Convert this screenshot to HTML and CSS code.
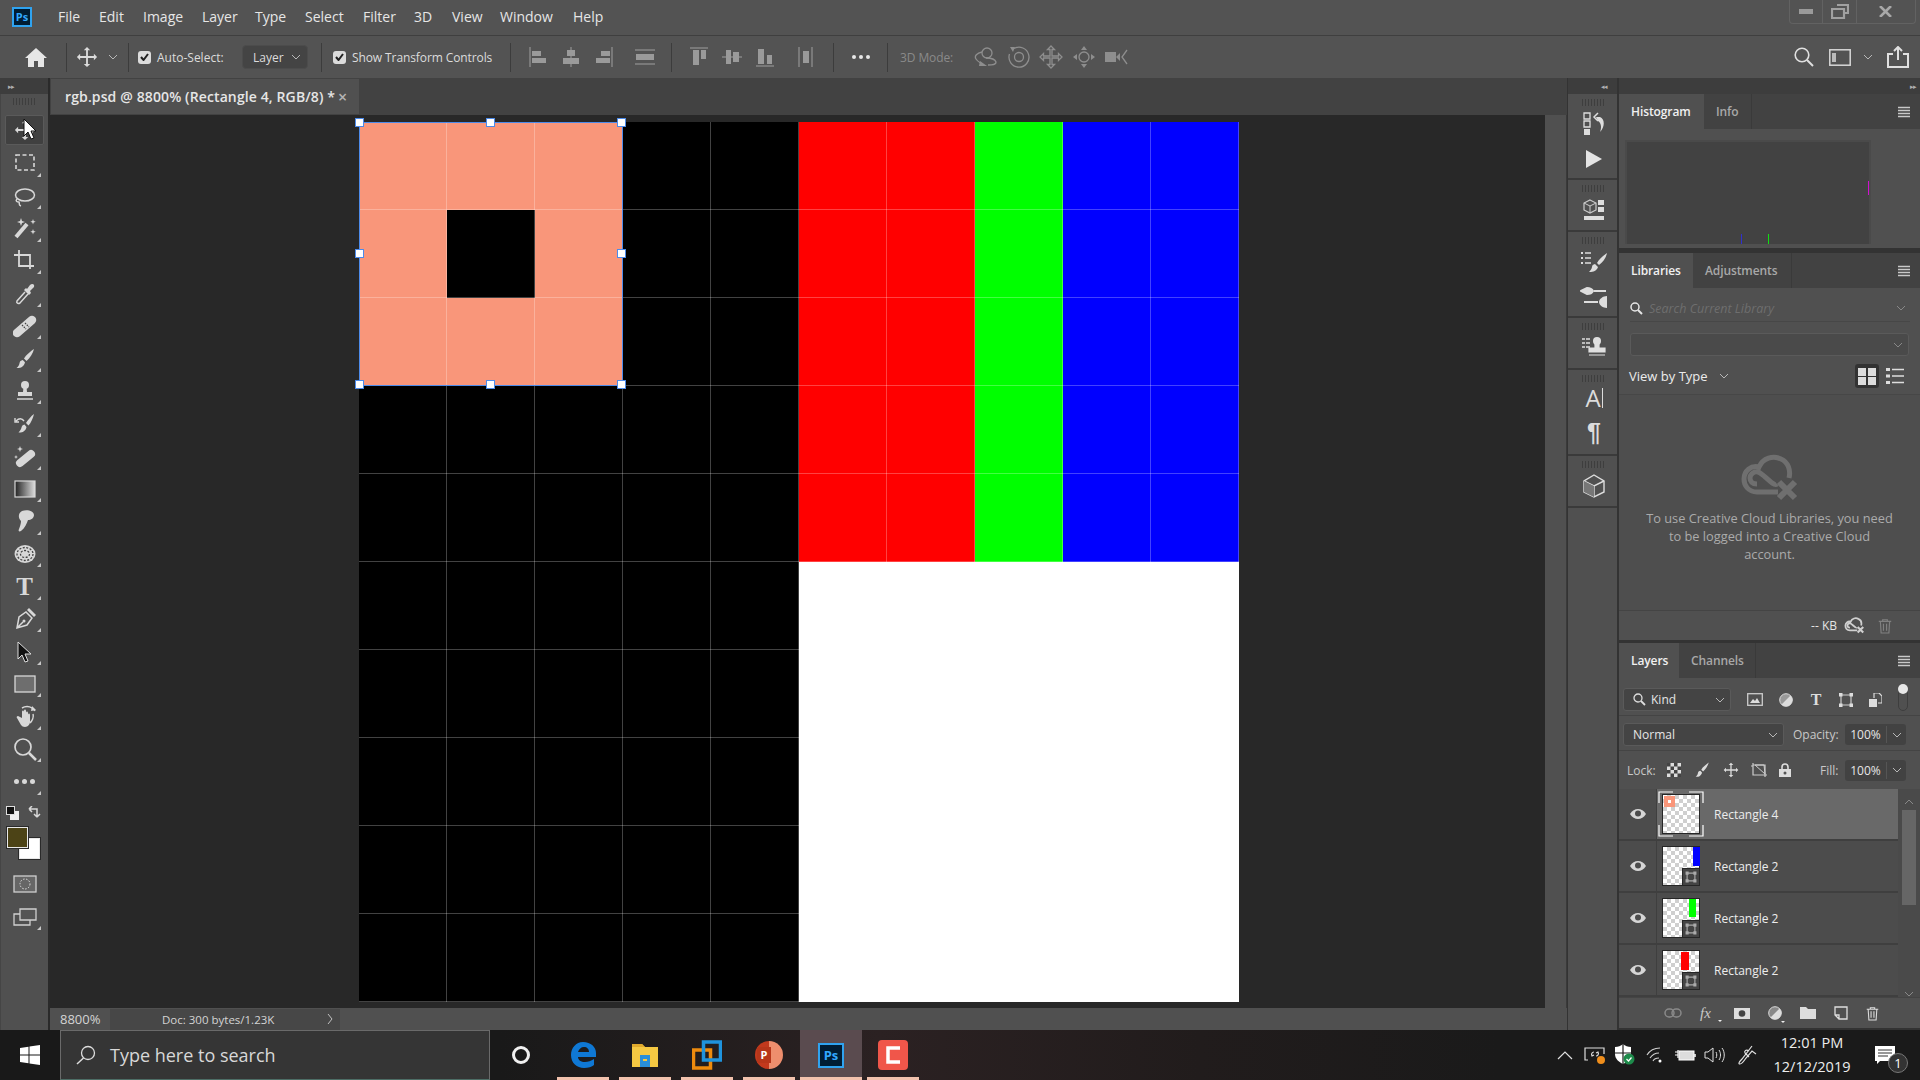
FILE: index.html
```html
<!DOCTYPE html>
<html lang="en">
<head>
<meta charset="utf-8">
<title>rgb.psd</title>
<link rel="stylesheet" href="styles.css">
</head>
<body>
<svg class="sprite" width="0" height="0">
  <defs>
    <linearGradient id="gr"><stop offset="0" stop-color="#222"/><stop offset="1" stop-color="#ddd"/></linearGradient>
    <symbol id="eye" viewBox="0 0 16 12"><path d="M0 6c2-3.500 5-5 8-5s6 1.500 8 5c-2 3.500-5 5-8 5s-6-1.500-8-5z" fill="#d6d6d6"/><circle cx="8" cy="5.500" r="3" fill="#4c4c4c"/></symbol>
    <symbol id="smart" viewBox="0 0 18 18"><path d="M4 4h10v10H4z" fill="none" stroke="#aaa" stroke-width="1.500"/><path d="M2 2h4v4H2zM12 2h4v4h-4zM2 12h4v4H2zM12 12h4v4h-4z" fill="#aaa"/></symbol>
    <symbol id="chev" viewBox="0 0 10 6"><path d="M1 1l4 4 4-4" fill="none" stroke="currentColor"/></symbol>
    <symbol id="move" viewBox="0 0 24 24"><path fill="currentColor" d="M12 1l3.500 3.500H13V11h6.500V8.500L23 12l-3.500 3.500V13H13v6.500h2.500L12 23l-3.500-3.500H11V13H4.500v2.500L1 12l3.500-3.500V11H11V4.500H8.500z"/></symbol>
    <symbol id="brush" viewBox="0 0 24 24"><path fill="currentColor" d="M21 2c-3 2-8 6-10 9.500l2.500 2.500C17 11 20 6 21 2zM9.800 13c-2 .3-3 1.500-3.300 3.200-.2 1.500-1.200 3.300-3 4.800 3.500.3 7.500-.8 8.500-5.800z"/></symbol>
    <symbol id="menu3" viewBox="0 0 14 12"><path d="M1 1.500h12M1 4.500h12M1 7.500h12M1 10.500h12" stroke="#c8c8c8" stroke-width="1.300"/></symbol>
    <symbol id="trash" viewBox="0 0 18 20"><path d="M1 4h16M6 4V2h6v2M3 4l1 15h10l1-15M7 7v9M11 7v9" fill="none" stroke="currentColor" stroke-width="1.500"/></symbol>
    <symbol id="ccx" viewBox="0 0 60 48"><path d="M38 38H17C8 38 4 31 4 25c0-8 7-14 15-12 4-9 14-12 22-8 7 3 10 11 8 19M17 30c-5 0-7-3-7-6 0-4 4-7 8-6 5 1 15 15 19 12" fill="none" stroke="currentColor" stroke-width="5"/><path d="M39 28l16 16M55 28L39 44" stroke="currentColor" stroke-width="6"/></symbol>
  </defs>
</svg>

<div class="app">
  <header class="menubar">
    <span class="ps-logo">Ps</span>
    <nav class="menus">
      <span class="m-file">File</span><span class="m-edit">Edit</span><span class="m-image">Image</span><span class="m-layer">Layer</span><span class="m-type">Type</span><span class="m-select">Select</span><span class="m-filter">Filter</span><span class="m-3d">3D</span><span class="m-view">View</span><span class="m-window">Window</span><span>Help</span>
    </nav>
    <div class="winbtns">
      <span class="wb"><svg width="14" height="5"><rect y="0" width="14" height="5" fill="#9a9a9a"/></svg></span>
      <span class="wb"><svg width="18" height="15" viewBox="0 0 18 15"><path d="M6 1h11v8h-3M1 5h12v9H1z" fill="none" stroke="#a0a0a0" stroke-width="2.200"/></svg></span>
      <span class="wb wb-close"><svg width="13" height="11" viewBox="0 0 13 11"><path d="M1 0l11 11M12 0L1 11" stroke="#a8a8a8" stroke-width="2.600"/></svg></span>
    </div>
  </header>

  <div class="options">
    <span class="op-home"><svg width="22" height="20" viewBox="0 0 22 20"><path fill="#e6e6e6" d="M11 1L0 11h3v9h6v-6h4v6h6v-9h3z"/></svg></span>
    <i class="op-sep"></i>
    <span class="op-move"><svg width="22" height="22"><use href="#move"/></svg><svg class="chev" width="10" height="6"><use href="#chev"/></svg></span>
    <i class="op-sep"></i>
    <span class="check c1"><svg width="9" height="8" viewBox="0 0 9 8"><path d="M1 4l2.500 3L8 1" fill="none" stroke="#222" stroke-width="2"/></svg></span>
    <span class="op-label l-auto">Auto-Select:</span>
    <span class="op-drop">Layer<svg class="chev" width="10" height="6"><use href="#chev"/></svg></span>
    <i class="op-sep s-drop"></i>
    <span class="check c2"><svg width="9" height="8" viewBox="0 0 9 8"><path d="M1 4l2.500 3L8 1" fill="none" stroke="#222" stroke-width="2"/></svg></span>
    <span class="op-label l-show">Show Transform Controls</span>
    <i class="op-sep s-show"></i>
    <div class="al-group">
      <svg width="24" height="22" viewBox="0 0 24 22"><path d="M4 1v20" stroke="#a0a0a0"/><path d="M6 5h9v5H6zM6 12h14v5H6z" fill="#9a9a9a"/></svg>
      <svg width="24" height="22" viewBox="0 0 24 22"><path d="M12 1v20" stroke="#a0a0a0"/><path d="M8 4h8v6H8zM4 12h16v6H4z" fill="#9a9a9a"/></svg>
      <svg width="24" height="22" viewBox="0 0 24 22"><path d="M20 1v20" stroke="#a0a0a0"/><path d="M9 5h9v5H9zM4 12h14v5H4z" fill="#9a9a9a"/></svg>
      <svg class="al-wide" width="24" height="22" viewBox="0 0 24 22"><path d="M2 4h20M2 18h20" stroke="#a0a0a0"/><path d="M3 8h18v6H3z" fill="#9a9a9a"/></svg>
    </div>
    <i class="op-sep s-al1"></i>
    <div class="al-group">
      <svg width="24" height="22" viewBox="0 0 24 22"><path d="M3 2h18" stroke="#a0a0a0"/><path d="M6 4h6v15H6zM14 4h5v9h-5z" fill="#9a9a9a"/></svg>
      <svg width="24" height="22" viewBox="0 0 24 22"><path d="M2 11h20" stroke="#a0a0a0"/><path d="M6 4h5v14H6zM13 6h6v10h-6z" fill="#9a9a9a"/></svg>
      <svg width="24" height="22" viewBox="0 0 24 22"><path d="M3 20h18" stroke="#a0a0a0"/><path d="M5 3h6v15H5zM14 9h5v9h-5z" fill="#9a9a9a"/></svg>
      <svg class="al-wide" width="24" height="22" viewBox="0 0 24 22"><path d="M5 1v20M18 1v20" stroke="#a0a0a0"/><path d="M9 5h6v12H9z" fill="#9a9a9a"/></svg>
    </div>
    <i class="op-sep s-al2"></i>
    <span class="op-dots"><b></b><b></b><b></b></span>
    <i class="op-sep s-dots"></i>
    <span class="op-3d">3D Mode:</span>
    <div class="d3-group">
      <svg width="24" height="24" viewBox="0 0 24 24"><g fill="none" stroke="#8e8e8e" stroke-width="1.300"><circle cx="13" cy="8" r="5"/><path d="M8 7C3 8 0 11 2 14s5 4 6 5M12 13c5 0 9 1 10 4 0 3-4 3-8 3"/></g><path d="M6 16l7 5H5z" fill="#8e8e8e"/></svg>
      <svg width="24" height="24" viewBox="0 0 24 24"><g fill="none" stroke="#8e8e8e" stroke-width="1.300"><circle cx="12" cy="12" r="4.500"/><path d="M7 3.500A10 10 0 1 1 2.500 9"/></g><path d="M3 2l5 0-2 5z" fill="#8e8e8e"/></svg>
      <svg width="24" height="24" viewBox="0 0 24 24"><path fill="none" stroke="#8e8e8e" stroke-width="1.300" d="M12 1l3.500 3.500H13V11h6.500V8.500L23 12l-3.500 3.500V13H13v6.500h2.500L12 23l-3.500-3.500H11V13H4.500v2.500L1 12l3.500-3.500V11H11V4.500H8.500z"/></svg>
      <svg width="24" height="24" viewBox="0 0 24 24"><circle cx="12" cy="12" r="5" fill="none" stroke="#8e8e8e" stroke-width="1.300"/><path fill="#8e8e8e" d="M12 1l3 4H9zM12 23l-3-4h6zM1 12l4-3v6zM23 12l-4 3V9z"/></svg>
      <svg width="24" height="24" viewBox="0 0 24 24"><path fill="#8e8e8e" d="M1 7h11v10H1zM12 12l4-4v8z"/><path d="M23 5l-5 7 5 7" fill="none" stroke="#8e8e8e" stroke-width="1.300"/></svg>
    </div>
    <div class="op-right">
      <svg width="20" height="20" viewBox="0 0 20 20"><circle cx="8" cy="8" r="6.800" fill="none" stroke="#e0e0e0" stroke-width="1.600"/><path d="M13 13l6 6" stroke="#e0e0e0" stroke-width="2"/></svg>
      <svg class="wk" width="22" height="17" viewBox="0 0 22 17"><rect x=".8" y=".8" width="20.400" height="15.400" fill="none" stroke="#d8d8d8" stroke-width="1.500"/><path d="M3 4h4v9H3z" fill="#bbb"/></svg>
      <svg class="chev wkc" width="10" height="6"><use href="#chev"/></svg>
      <svg class="sh" width="22" height="22" viewBox="0 0 22 22"><path d="M6 8H1v13h20V8h-5M11 14V2M7 5l4-4 4 4" fill="none" stroke="#e0e0e0" stroke-width="2"/></svg>
    </div>
  </div>

  <main class="main">
    <aside class="toolbar">
      <div class="strip"><span class="arrows">&#9656;&#9656;</span></div>
      <div class="tool-body">
        <div class="grip"></div>
        <div class="tool active"><svg width="22" height="22"><use href="#move"/></svg></div>
        <div class="tool"><svg width="22" height="22" viewBox="0 0 22 22"><rect x="2" y="3" width="18" height="15" fill="none" stroke="currentColor" stroke-width="1.600" stroke-dasharray="4 2.500"/></svg></div>
        <div class="tool"><svg width="24" height="24" viewBox="0 -2 24 24"><ellipse cx="12" cy="9" rx="9.500" ry="6" fill="none" stroke="currentColor" stroke-width="1.500"/><path d="M4 13c-2 2 0 3 2 3 1 2-1 3 2 4" fill="none" stroke="currentColor" stroke-width="1.500"/></svg></div>
        <div class="tool"><svg width="24" height="24" viewBox="0 0 24 24"><path d="M3 21L14 8" stroke="currentColor" stroke-width="4"/><path fill="currentColor" d="M8 2l1 3 3 1-3 1-1 3-1-3-3-1 3-1zM20 3l.7 2 2 .7-2 .7-.7 2-.7-2-2-.7 2-.7zM20 13l.7 2 2 .7-2 .7-.7 2-.7-2-2-.7 2-.7z"/></svg></div>
        <div class="tool"><svg width="24" height="24" viewBox="0 0 24 24"><path d="M1 6h16v14M6 1v16h15" fill="none" stroke="currentColor" stroke-width="1.800"/></svg></div>
        <div class="tool"><svg width="24" height="24" viewBox="0 0 24 24"><path d="M12 10L4 19c-1 2 1 3 3 2l8-9" fill="none" stroke="currentColor" stroke-width="1.500"/><path d="M11 8l5 5 2-2-1-2 4-4c1-3-2-4-4-2l-3 4-1-1z" fill="currentColor"/></svg></div>
        <div class="tool"><svg width="24" height="24" viewBox="0 0 24 24"><path d="M4 19L19 6" stroke="currentColor" stroke-width="8.500" stroke-linecap="round"/><path d="M9 11l4 4M12 9l4 4" stroke="#444" stroke-width="1.200" stroke-dasharray="1.500 1"/></svg></div>
        <div class="tool"><svg width="24" height="24"><use href="#brush"/></svg></div>
        <div class="tool"><svg width="24" height="24" viewBox="0 0 24 24"><circle cx="12" cy="6" r="4" fill="currentColor"/><path d="M10.500 8h3l.5 5h5v4H5v-4h5z" fill="currentColor"/><path d="M4 20h16" stroke="currentColor" stroke-width="1.500"/></svg></div>
        <div class="tool"><svg width="24" height="24" viewBox="0 0 24 24"><path fill="currentColor" d="M21 2c-3 2-6 6-8 9l2.500 2.500C18 11 20 6 21 2zM11.500 12.500c-2 .3-2.500 1.500-3 3-.3 1.500-1.500 3.500-3 5 3.500.3 7-.8 8-5.500z"/><path d="M3 9c3-3 6-3 8 0M2 6v4h4" fill="none" stroke="currentColor" stroke-width="1.400"/></svg></div>
        <div class="tool"><svg width="24" height="24" viewBox="0 0 24 24"><path d="M7 19L18 10" stroke="currentColor" stroke-width="8" stroke-linecap="round"/><path fill="currentColor" d="M7 2l.8 2.200L10 5l-2.200.8L7 8l-.8-2.200L4 5l2.200-.8zM3 11l.6 1.400L5 13l-1.400.6L3 15l-.6-1.400L1 13l1.400-.6z"/></svg></div>
        <div class="tool"><svg width="22" height="18" viewBox="0 0 22 18"><rect x="1" y="1" width="20" height="16" fill="url(#gr)" stroke="currentColor" stroke-width="1.200"/></svg></div>
        <div class="tool"><svg width="24" height="24" viewBox="0 0 24 24"><path fill="currentColor" d="M9 2c5-2 12 0 12 4 0 3-3 5-6 5-1 3-3 8-7 11-2 1-3 0-2-2 1-3 2-5 2-8C5 9 5 4 9 2z"/></svg></div>
        <div class="tool"><svg width="24" height="22" viewBox="0 0 24 22"><ellipse cx="12" cy="11" rx="10.500" ry="9" fill="currentColor"/><ellipse cx="12" cy="11" rx="8" ry="6.500" fill="none" stroke="#444" stroke-width="1.300" stroke-dasharray="2 1.500"/><ellipse cx="12" cy="11" rx="4.500" ry="3.500" fill="none" stroke="#444" stroke-width="1.300" stroke-dasharray="2 1.500"/></svg></div>
        <div class="tool tool-t">T</div>
        <div class="tool"><svg width="24" height="24" viewBox="0 0 24 24"><path d="M4 21l2-11 7-5 6 6-5 7zM4 21l6-6" fill="none" stroke="currentColor" stroke-width="1.500"/><path d="M14 3l2-2 7 7-2 2z" fill="currentColor"/><circle cx="11" cy="14" r="1.500" fill="currentColor"/></svg></div>
        <div class="tool"><svg width="20" height="22" viewBox="0 0 20 22"><path d="M3 1v17l4-4 3 7 3-1-3-7h6z" fill="#111" stroke="#ddd" stroke-width="1"/></svg></div>
        <div class="tool"><svg width="22" height="18" viewBox="0 0 22 18"><rect x="1" y="1" width="20" height="16" fill="#6e6e6e" stroke="currentColor" stroke-width="1.300"/></svg></div>
        <div class="tool"><svg width="24" height="24" viewBox="0 0 24 24"><path fill="currentColor" d="M5 11c-1 0-2 1-1 2l4 7c1 1 2 2 4 2 3 0 5-3 5-5V10c0-2-2-2-2 0V8c0-2-2-2-2 0V6c0-2-2-2-2 0v1C11 5 9 5 9 7v6z"/><path d="M9 3c5-3 11-1 13 3M20 9c1 3-1 7-3 9" fill="none" stroke="currentColor" stroke-width="1.500"/><path d="M19 1l4 4-5 1z" fill="currentColor"/></svg></div>
        <div class="tool"><svg width="24" height="24" viewBox="0 0 24 24"><circle cx="10" cy="10" r="8" fill="none" stroke="currentColor" stroke-width="1.700"/><path d="M16 16l7 7" stroke="currentColor" stroke-width="2.500"/></svg></div>
        <div class="tool tool-dots"><b></b><b></b><b></b></div>
        <div class="colors">
          <svg class="col-reset" width="13" height="14" viewBox="0 0 13 14"><rect x="4" y="5" width="9" height="9" fill="#eee"/><rect x=".5" y=".5" width="8" height="8" fill="#111" stroke="#ddd"/></svg>
          <svg class="col-swap" width="14" height="14" viewBox="0 0 14 14"><path d="M1 3h8v8M1 3l3-3M1 3l3 3M9 11l-3-3M9 11l3-3" fill="none" stroke="#d8d8d8" stroke-width="1.500"/></svg>
          <span class="swatch bg"></span><span class="swatch fg"></span>
        </div>
        <div class="tool-plain"><svg width="24" height="18" viewBox="0 0 24 18"><rect x="1" y="1" width="22" height="16" fill="#666" stroke="#d0d0d0" stroke-width="1.300"/><circle cx="12" cy="9" r="5" fill="none" stroke="#e0e0e0" stroke-dasharray="1.500 1.500"/></svg></div>
        <div class="tool tool-plain2"><svg width="24" height="18" viewBox="0 0 24 18"><path d="M1 6h16v11H1z" fill="none" stroke="#d0d0d0" stroke-width="1.300"/><path d="M7 1h16v11H7z" fill="#555" stroke="#d0d0d0" stroke-width="1.300"/></svg></div>
      </div>
      <svg class="cursor" width="14" height="22" viewBox="0 0 14 22"><path d="M1 1v17l4-4 3 7 3-1-3-7h5z" fill="#fff" stroke="#111"/></svg>
    </aside>

    <section class="doc">
      <div class="tabbar"><div class="tab"><span>rgb.psd @ 8800% (Rectangle 4, RGB/8) *</span><em>&#215;</em></div></div>
      <div class="work">
        <div class="canvas-area">
          <div class="canvas">
            <div class="c-salmon"></div>
            <div class="c-hole"></div>
            <div class="c-red"></div>
            <div class="c-green"></div>
            <div class="c-blue"></div>
            <div class="c-white"></div>
            <div class="gridlines"></div>
            <div class="selection">
              <i class="hd hx0 hy0"></i><i class="hd hx1 hy0"></i><i class="hd hx2 hy0"></i>
              <i class="hd hx0 hy1"></i><i class="hd hx2 hy1"></i>
              <i class="hd hx0 hy2"></i><i class="hd hx1 hy2"></i><i class="hd hx2 hy2"></i>
            </div>
          </div>
        </div>
        <div class="vscroll"></div>
      </div>
      <div class="status">
        <span class="zoomval">8800%</span>
        <div class="docinfo"><span>Doc: 300 bytes/1.23K</span><svg width="6" height="12" viewBox="0 0 6 12"><path d="M1 1l4 5-4 5" fill="none" stroke="#c0c0c0"/></svg></div>
      </div>
    </section>

    <aside class="dock">
      <div class="strip dock-top"><span class="arrows">&#9666;&#9666;</span></div>
      <div class="dock-g g2">
        <div class="grip"></div>
        <div class="di"><svg width="26" height="24" viewBox="0 0 26 24"><path d="M3 1h6v6H3zM3 9h6v6H3z" fill="none" stroke="#ddd" stroke-width="1.300"/><path d="M3 17h6v6H3z" fill="#ddd"/><path d="M15 5h4c5 2 5 10 0 15 2-5 1-9-2-11" fill="#ddd"/><path d="M17 1l-4 4 4 4" fill="none" stroke="#ddd" stroke-width="1.500"/></svg></div>
        <div class="di"><svg width="18" height="18" viewBox="0 0 18 18"><path d="M1 0l16 9-16 9z" fill="#e4e4e4"/></svg></div>
      </div>
      <div class="dock-g g1">
        <div class="grip"></div>
        <div class="di"><svg width="22" height="22" viewBox="0 0 22 22"><path d="M7 1l6 3v7l-6 3-6-3V4z" fill="none" stroke="#ccc" stroke-width="1.200"/><path d="M1 4l6 3 6-3M7 7v7" stroke="#ccc" fill="none"/><path d="M15 1h6v5h-6zM15 8h6v5h-6zM1 17h20v4H1z" fill="#ddd"/></svg></div>
      </div>
      <div class="dock-g g2">
        <div class="grip"></div>
        <div class="di"><svg width="28" height="24" viewBox="0 0 28 24"><path d="M1 2h2v2H1zM1 7h2v2H1zM1 12h2v2H1z" fill="#ddd"/><path d="M5 3h6M5 8h6M5 13h6" stroke="#ddd" stroke-width="1.500"/><path fill="#ddd" d="M27 3c-4 3-8 6-10 10l2 2c4-3 7-7 8-12zM15 14c-2 .3-3 1.500-3 3s-2 4-3 5c3 .3 8-1 9-5z"/></svg></div>
        <div class="di"><svg width="28" height="22" viewBox="0 0 28 22"><path d="M1 5l6-3c3 0 5 1 6 3-1 2-3 3-6 3zM14 5h12M4 16h14" fill="#ddd" stroke="#ddd" stroke-width="2"/><path d="M27 10v12c-4 0-8-3-8-6s4-6 8-6z" fill="#ddd"/></svg></div>
      </div>
      <div class="dock-g g1">
        <div class="grip"></div>
        <div class="di"><svg width="26" height="22" viewBox="0 0 26 22"><circle cx="16" cy="4" r="4" fill="#e0e0e0"/><path d="M14 7h4v4h6v4H8v-4h6zM8 18h16" fill="#e0e0e0" stroke="#e0e0e0" stroke-width="1.200"/><path d="M1 2h3M1 6h3M1 10h3M5 2h4M5 6h4M5 10h4" stroke="#ddd" stroke-width="1.400"/></svg></div>
      </div>
      <div class="dock-g g2">
        <div class="grip"></div>
        <div class="di char-a"><span>A</span><i></i></div>
        <div class="di char-p">&#182;</div>
      </div>
      <div class="dock-g g1">
        <div class="grip"></div>
        <div class="di"><svg width="22" height="24" viewBox="0 0 22 24"><path d="M11 1l10 6v11l-10 5-10-5V7z" fill="none" stroke="#ddd" stroke-width="1.400"/><path d="M1 7l10 5 10-5M11 12v11" fill="none" stroke="#ddd" stroke-width="1.400"/><path d="M1 7l10 5v11L1 18z" fill="#777"/></svg></div>
      </div>
    </aside>

    <aside class="panels">
      <div class="strip panels-top"><span class="arrows">&#9656;&#9656;</span></div>

      <section class="panel p-hist">
        <div class="tabs">
          <span class="ptab on t-hist">Histogram</span><span class="ptab t-info">Info</span>
          <svg class="pmenu" width="14" height="12"><use href="#menu3"/></svg>
        </div>
        <div class="hist-body"><div class="hist-box"><i class="bar-m"></i><i class="bar-b"></i><i class="bar-g"></i></div></div>
      </section>

      <section class="panel p-lib">
        <div class="tabs">
          <span class="ptab on t-lib">Libraries</span><span class="ptab t-adj">Adjustments</span>
          <svg class="pmenu" width="14" height="12"><use href="#menu3"/></svg>
        </div>
        <div class="lib-search">
          <svg width="13" height="13" viewBox="0 0 13 13"><circle cx="5" cy="5" r="4" fill="none" stroke="#e6e6e6" stroke-width="1.500"/><path d="M8 8l4 4" stroke="#e6e6e6" stroke-width="2"/></svg>
          <span>Search Current Library</span>
          <svg class="chev" width="10" height="6"><use href="#chev"/></svg>
        </div>
        <div class="lib-select"><svg class="chev" width="10" height="6"><use href="#chev"/></svg></div>
        <div class="lib-view">
          <span>View by Type</span>
          <svg class="chev" width="10" height="6"><use href="#chev"/></svg>
          <span class="v-grid"><svg width="18" height="17" viewBox="0 0 18 17"><path d="M0 0h8v8H0zM10 0h8v8h-8zM0 9h8v8H0zM10 9h8v8h-8z" fill="#ddd"/></svg></span>
          <svg class="v-list" width="18" height="16" viewBox="0 0 18 16"><path d="M0 0h4v3H0zM0 6.500h4v3H0zM0 13h4v3H0z" fill="#ddd"/><path d="M6 1.500h12M6 8h12M6 14.500h12" stroke="#ddd" stroke-width="1.500"/></svg>
        </div>
        <div class="lib-body">
          <svg class="cc" width="62" height="48"><use href="#ccx"/></svg>
          <p>To use Creative Cloud Libraries, you need to be logged into a Creative Cloud account.</p>
        </div>
        <div class="lib-foot">
          <span>-- KB</span>
          <svg class="cc-small" width="21" height="17"><use href="#ccx"/></svg>
          <svg class="lib-trash" width="14" height="16"><use href="#trash"/></svg>
        </div>
      </section>

      <section class="panel p-layers">
        <div class="tabs">
          <span class="ptab on t-lay">Layers</span><span class="ptab t-chan">Channels</span>
          <svg class="pmenu" width="14" height="12"><use href="#menu3"/></svg>
        </div>
        <div class="lrow r-filter">
          <span class="drop d-kind"><svg width="13" height="13" viewBox="0 0 13 13"><circle cx="5" cy="5" r="4" fill="none" stroke="#ddd" stroke-width="1.300"/><path d="M8 8l4 4" stroke="#ddd" stroke-width="1.800"/></svg>Kind<svg class="chev" width="10" height="6"><use href="#chev"/></svg></span>
          <div class="f-icons">
            <svg width="16" height="13" viewBox="0 0 16 13"><rect x=".7" y=".7" width="14.600" height="11.600" fill="none" stroke="#ccc" stroke-width="1.300"/><path d="M3 10l3-4 2 2 2-3 3 5z" fill="#ddd"/></svg>
            <svg width="14" height="14" viewBox="0 0 14 14"><circle cx="7" cy="7" r="6.300" fill="#999" stroke="#ddd" stroke-width="1"/><path d="M11.500 2.500a6.300 6.300 0 0 1-9 9z" fill="#ddd"/></svg>
            <span class="f-t">T</span>
            <svg width="14" height="14" viewBox="0 0 14 14"><path d="M2 2h10v10H2z" fill="none" stroke="#ccc" stroke-width="1.200"/><path d="M0 0h3.500v3.500H0zM10.500 0H14v3.500h-3.500zM0 10.500h3.500V14H0zM10.500 10.500H14V14h-3.500z" fill="#ddd"/></svg>
            <svg width="13" height="14" viewBox="0 0 13 14"><path d="M5 5V0h5l3 3v7H9" fill="none" stroke="#ddd" stroke-width="1.200"/><path d="M0 6h8v8H0z" fill="#ddd"/></svg>
          </div>
          <span class="toggle"><b></b></span>
        </div>
        <div class="lrow r-blend">
          <span class="drop d-normal">Normal<svg class="chev" width="10" height="6"><use href="#chev"/></svg></span>
          <span class="fld-label l-op">Opacity:</span>
          <span class="fld"><span>100%</span><svg class="chev" width="10" height="6"><use href="#chev"/></svg></span>
        </div>
        <div class="lrow r-lock">
          <span class="fld-label l-lock">Lock:</span>
          <div class="lock-icons">
            <svg width="14" height="14" viewBox="0 0 14 14"><rect width="14" height="14" fill="#ddd"/><path d="M0 0h3.500v3.500H0zM7 0h3.500v3.500H7zM3.500 3.500H7V7H3.500zM10.500 3.500H14V7h-3.500zM0 7h3.500v3.500H0zM7 7h3.500v3.500H7zM3.500 10.500H7V14H3.500zM10.500 10.500H14V14h-3.500z" fill="#444"/></svg>
            <svg width="18" height="18"><use href="#brush"/></svg>
            <svg width="16" height="16"><use href="#move"/></svg>
            <svg width="16" height="14" viewBox="0 0 16 14"><path d="M2 2h12v10H2zM0 3h2M2 0v2M14 12v2M14 12h2" fill="none" stroke="#ccc" stroke-width="1.200"/><path d="M13 2L4 2 14 11z" fill="none" stroke="#ccc"/></svg>
            <svg width="12" height="14" viewBox="0 0 12 14"><path d="M3 6V4a3 3 0 0 1 6 0v2" fill="none" stroke="#ddd" stroke-width="1.600"/><path d="M0 6h12v8H0z" fill="#ddd"/><circle cx="6" cy="10" r="1.500" fill="#555"/></svg>
          </div>
          <span class="fld-label l-fill">Fill:</span>
          <span class="fld"><span>100%</span><svg class="chev" width="10" height="6"><use href="#chev"/></svg></span>
        </div>
        <div class="layers-wrap">
          <div class="layer-list">
            <div class="layer active">
              <span class="eye"><svg width="16" height="12"><use href="#eye"/></svg></span>
              <div class="lcell">
                <span class="thumb"><i class="tc tc-salmon"></i>
                  <svg class="brackets" width="46" height="46" viewBox="0 0 46 46"><path d="M1 12V1h14M31 1h14v11M45 34v11H31M15 45H1V34" fill="none" stroke="#fff" stroke-width="1.200"/></svg>
                </span>
                <span class="lname">Rectangle 4</span>
              </div>
            </div>
            <div class="layer">
              <span class="eye"><svg width="16" height="12"><use href="#eye"/></svg></span>
              <div class="lcell">
                <span class="thumb"><i class="tc tc-blue"></i><span class="badge"><svg width="14" height="14"><use href="#smart"/></svg></span></span>
                <span class="lname">Rectangle 2</span>
              </div>
            </div>
            <div class="layer">
              <span class="eye"><svg width="16" height="12"><use href="#eye"/></svg></span>
              <div class="lcell">
                <span class="thumb"><i class="tc tc-green"></i><span class="badge"><svg width="14" height="14"><use href="#smart"/></svg></span></span>
                <span class="lname">Rectangle 2</span>
              </div>
            </div>
            <div class="layer">
              <span class="eye"><svg width="16" height="12"><use href="#eye"/></svg></span>
              <div class="lcell">
                <span class="thumb"><i class="tc tc-red"></i><span class="badge"><svg width="14" height="14"><use href="#smart"/></svg></span></span>
                <span class="lname">Rectangle 2</span>
              </div>
            </div>
          </div>
          <div class="l-scroll">
            <svg class="chev up" width="10" height="6"><use href="#chev"/></svg>
            <div class="l-thumb"></div>
            <svg class="chev" width="10" height="6"><use href="#chev"/></svg>
          </div>
        </div>
        <div class="l-foot">
          <svg class="dim" width="18" height="10" viewBox="0 0 18 10"><rect x="1" y="1" width="9" height="8" rx="4" fill="none" stroke="#8a8a8a" stroke-width="1.500"/><rect x="8" y="1" width="9" height="8" rx="4" fill="none" stroke="#8a8a8a" stroke-width="1.500"/></svg>
          <span class="fx">fx</span>
          <svg width="16" height="11" viewBox="0 0 16 11"><path d="M0 0h16v11H0z" fill="#ddd"/><circle cx="8" cy="5.500" r="3.300" fill="#444"/></svg>
          <svg class="ov" width="14" height="14" viewBox="0 0 14 14"><circle cx="7" cy="7" r="6.300" fill="#888" stroke="#ddd"/><path d="M11.500 2.500a6.300 6.300 0 0 1-9 9z" fill="#ddd"/><path d="M13 15h4l-2 2z" fill="#eee"/></svg>
          <svg width="16" height="12" viewBox="0 0 16 12"><path d="M0 0h6l2 2h8v10H0z" fill="#ddd"/></svg>
          <svg width="14" height="14" viewBox="0 0 14 14"><path d="M5 13H13V1H1v8z M1 9h4v4" fill="none" stroke="#ddd" stroke-width="1.300"/></svg>
          <svg class="l-trash" width="13" height="15"><use href="#trash"/></svg>
        </div>
      </section>
    </aside>
  </main>
</div>

<footer class="taskbar">
  <span class="start"><svg width="20" height="20" viewBox="0 0 20 20"><path fill="#fff" d="M0 3l8.500-1.200V9.500H0zM9.500 1.600L20 0v9.500H9.500zM0 10.500h8.500v7.700L0 17zM9.500 10.500H20V20L9.500 18.400z"/></svg></span>
  <div class="searchbox">
    <svg width="20" height="20" viewBox="0 0 20 20"><circle cx="12" cy="8" r="6.500" fill="none" stroke="#ddd" stroke-width="1.300"/><path d="M7.500 13L1 19" stroke="#ddd" stroke-width="1.500"/></svg>
    <span>Type here to search</span>
  </div>
  <span class="cortana"><i></i></span>
  <span class="tk run"><svg width="26" height="28" viewBox="0 0 26 28"><path fill="#0f78d4" d="M13 1C6 1 1 7 1 14c0 8 6 13 13 13 4 0 8-1 10-3v-6c-3 2-6 3-9 3-4 0-7-2-7-5h18v-4C26 6 21 1 13 1zM8 11c1-3 3-5 6-5 3 0 5 2 5 5z"/></svg></span>
  <span class="tk run"><svg width="28" height="26" viewBox="0 0 28 26"><path fill="#f5c842" d="M1 2h10l3 3h13v20H1z"/><path fill="#e0a92c" d="M1 2h10l3 3H1z"/><path fill="#2a8fd8" d="M9 13h10v12H9z"/><path fill="#f5c842" d="M12 17h4v2h-4z"/></svg></span>
  <span class="tk run"><svg width="30" height="30" viewBox="0 0 30 30"><rect x="1.500" y="10" width="17" height="18" fill="none" stroke="#ee8b0e" stroke-width="3.500"/><rect x="11.500" y="2" width="17" height="18" fill="none" stroke="#1f93dd" stroke-width="3.500"/></svg></span>
  <span class="tk run"><span class="ppt"><b>P</b></span></span>
  <span class="tk run tk-active"><span class="ps-logo ps-big">Ps</span></span>
  <span class="tk run"><span class="capp"><svg width="16" height="20" viewBox="0 0 16 20"><path d="M15 3H3v14h12" fill="none" stroke="#fff" stroke-width="3.500"/></svg></span></span>
  <div class="tray">
    <span class="ti"><svg width="16" height="9" viewBox="0 0 16 9"><path d="M1 8l7-7 7 7" fill="none" stroke="#e0e0e0" stroke-width="1.200"/></svg></span>
    <span class="ti ti-net"><svg width="22" height="20" viewBox="0 0 22 20"><path d="M4 15H1V3h19v6M10 7c-2 0-3 2-2 4l2-1M12 11c2 0 3-2 2-4l-2 1" fill="none" stroke="#ddd" stroke-width="1.200"/><circle cx="17" cy="15" r="4" fill="#ef8e1c"/></svg></span>
    <span class="ti"><svg width="22" height="22" viewBox="0 0 22 22"><path d="M1 3c3 0 6-1 8-3 2 2 5 3 8 3v7c0 5-4 8-8 10-4-2-8-5-8-10z" fill="#fff"/><path d="M9 0v20M1 9h16" stroke="#1a1a1a" stroke-width="1.200"/><circle cx="15" cy="15" r="5.500" fill="#1d8a4a"/><path d="M12.500 15l2 2 3-3.500" fill="none" stroke="#fff" stroke-width="1.200"/></svg></span>
    <span class="ti"><svg width="18" height="16" viewBox="0 0 18 16"><path d="M1 8C4 3 9 1 14 1M4 11c2-3 5-5 9-5M7 14c1-2 3-3 6-3" fill="none" stroke="#cfcfcf" stroke-width="1.100"/><circle cx="14" cy="14" r="1.500" fill="#fff"/></svg></span>
    <span class="ti"><svg width="22" height="14" viewBox="0 0 22 14"><path d="M1 4h3M1 7h3M4 2v8" stroke="#fff" stroke-width="1.200"/><rect x="5" y="3" width="15" height="9" fill="#ddd" stroke="#fff"/><path d="M21 6v3" stroke="#fff" stroke-width="1.500"/></svg></span>
    <span class="ti"><svg width="22" height="16" viewBox="0 0 22 16"><path d="M1 5h3l5-4v14l-5-4H1zM12 5c1 2 1 4 0 6M15 3c2 3 2 7 0 10M18 1c3 4 3 10 0 14" fill="none" stroke="#e0e0e0"/></svg></span>
    <span class="ti ti-pen"><svg width="20" height="20" viewBox="0 0 20 20"><path d="M14 1L4 14c-3 3-4 5-2 5s4-3 6-6l6-7 4 3M11 6c-3-2-5 0-4 2l4 4" fill="none" stroke="#e0e0e0" stroke-width="1.200"/></svg></span>
    <span class="clock"><span>12:01 PM</span><span>12/12/2019</span></span>
    <span class="notif"><svg width="20" height="18" viewBox="0 0 20 18"><path d="M0 0h20v15H5l-3 3v-3H0z" fill="#fff"/><path d="M3 4h14M3 7h14M3 10h10" stroke="#333"/></svg><b>1</b></span>
  </div>
</footer>
</body>
</html>
```
FILE: styles.css
```css
* { box-sizing: border-box; }
html, body { margin: 0; height: 100%; }
body { width: 1920px; height: 1080px; overflow: hidden; background: #1a1a1a; font-family: "Open Sans", "Noto Sans", sans-serif; color: #dcdcdc; display: flex; flex-direction: column; }
svg { display: block; flex: none; }
svg.ov { overflow: visible; }
.sprite { position: absolute; }
i, em { font-style: normal; }
.chev { color: #b8b8b8; }

.app { height: 1030px; display: flex; flex-direction: column; background: #535353; }

/* menu */
.menubar { height: 36px; flex: none; display: flex; align-items: flex-start; border-bottom: 1px solid #3f3f3f; background: #535353; }
.ps-logo { width: 20px; height: 20px; margin: 7px 0 0 12px; background: #001d34; border: 2px solid #2fa3f0; color: #31a8ff; font: 700 11px/16px "Open Sans", sans-serif; text-align: center; flex: none; }
.menus { display: flex; margin: 7px 0 0 26px; font-size: 14px; line-height: 20px; color: #e6e6e6; }
.menus span { flex: none; }
.m-file { width: 41px; } .m-edit { width: 44px; } .m-image { width: 59px; } .m-layer { width: 53px; } .m-type { width: 50px; } .m-select { width: 58px; } .m-filter { width: 51px; } .m-3d { width: 38px; } .m-view { width: 48px; } .m-window { width: 73px; }
.winbtns { margin: 0 4px 0 auto; width: 127px; height: 24px; display: flex; border: 1px solid #626262; border-top: 0; border-radius: 0 0 4px 4px; }
.wb { width: 34px; display: flex; align-items: center; justify-content: center; border-right: 1px solid #626262; }
.wb-close { width: 59px; border-right: 0; }

/* options */
.options { height: 42px; flex: none; display: flex; align-items: center; border-bottom: 0; background: #535353; color: #dcdcdc; font-size: 12px; }
.op-sep { width: 1px; height: 29px; background: #3c3c3c; flex: none; }
.op-home { width: 66px; display: flex; justify-content: center; padding-left: 5px; }
.op-move { width: 61px; display: flex; align-items: center; padding-left: 9px; gap: 10px; color: #dcdcdc; }
.check { width: 13px; height: 13px; background: #dcdcdc; border-radius: 3px; display: flex; align-items: center; justify-content: center; flex: none; }
.c1 { margin-left: 9px; }
.c2 { margin-left: 11px; }
.op-label { flex: none; white-space: nowrap; margin-left: 6px; font-size: 12px; }
.l-auto { width: 67px; }
.op-drop { width: 66px; height: 24px; margin: 0 13px 0 18px; background: #444; border: 1px solid #4c4c4c; border-radius: 4px; display: flex; align-items: center; justify-content: space-between; padding: 0 6px 0 10px; flex: none; }
.l-show { width: 140px; margin-right: 18px; letter-spacing: -.1px; }
.al-group { display: flex; gap: 9px; margin: 0 15px; flex: none; }
.al-wide { margin-left: 8px; }
.s-al1 { margin-left: -1px; }
.op-dots { width: 54px; display: flex; justify-content: center; gap: 3px; margin-left: 0; }
.op-dots b { width: 4px; height: 4px; border-radius: 50%; background: #e8e8e8; }
.s-dots { margin-left: -1px; }
.op-3d { margin-left: 12px; width: 59px; color: #8a8a8a; font-size: 12px; white-space: nowrap; letter-spacing: -.1px; }
.d3-group { display: flex; gap: 8.500px; margin-left: 15px; }
.op-right { margin-left: auto; display: flex; align-items: center; padding-right: 11px; }
.wk { margin-left: 15px; }
.wkc { margin-left: 12px; }
.sh { margin-left: 14px; }

/* main */
.main { height: 952px; flex: none; display: flex; }
.strip { height: 16px; background: #3d3d3d; display: flex; align-items: center; flex: none; }
.arrows { font-size: 7px; letter-spacing: -1px; color: #b0b0b0; line-height: 1; }
.grip { height: 7px; width: 24px; margin: 0 auto; flex: none; background: repeating-linear-gradient(to right, #3e3e3e 0 1px, transparent 1px 3px); }

/* toolbar */
.toolbar { width: 50px; flex: none; position: relative; display: flex; flex-direction: column; background: #2a2a2a; }
.toolbar .strip { width: 48px; padding-left: 8px; }
.tool-body { width: 48px; flex: 1; background: #505050; display: flex; flex-direction: column; padding-top: 4px; border-left: 1px solid #454545; }
.tool-body .grip { margin-bottom: 9.500px; }
.tool { height: 32.550px; flex: none; display: flex; align-items: center; justify-content: center; color: #d8d8d8; position: relative; }
.tool::after { content: ""; position: absolute; right: 7px; bottom: 3px; border: 2px solid transparent; border-right-color: #c8c8c8; border-bottom-color: #c8c8c8; }
.tool.active { height: 30px; margin: 0 4px 2.550px; background: #404040; border: 1px solid #5a5a5a; border-radius: 2px; }
.tool.active::after, .tool-plain::after { display: none; }
.tool-t { font: 700 25px/1 "Liberation Serif", serif; }
.tool-dots { gap: 3px; }
.tool-dots b { width: 5px; height: 5px; border-radius: 50%; background: #d8d8d8; }
.colors { position: relative; height: 60px; flex: none; margin-top: 3px; }
.col-reset { position: absolute; left: 5px; top: 5px; }
.col-swap { position: absolute; left: 27px; top: 5px; }
.swatch { position: absolute; width: 23px; height: 23px; border: 1px solid #2a2a2a; outline: 1px solid #e8e8e8; outline-offset: -2px; }
.swatch.fg { left: 5px; top: 25px; background: #4c4316; }
.swatch.bg { left: 17px; top: 36px; background: #fff; }
.tool-plain { height: 30px; display: flex; justify-content: center; align-items: center; margin-top: 8px; }
.tool-plain2 { margin-top: 2px; height: 32px; }
.cursor { position: absolute; left: 23px; top: 40px; }

/* doc */
.doc { flex: 1; min-width: 0; display: flex; flex-direction: column; }
.tabbar { height: 37px; flex: none; background: #424242; padding-left: 1px; padding-top: 1px; }
.tab { width: 308px; height: 35px; background: #505050; display: flex; align-items: center; padding-left: 14px; font-size: 14px; font-weight: 600; letter-spacing: .12px; color: #e6e6e6; white-space: nowrap; }
.tab em { margin-left: 3px; font-size: 16px; color: #b4b4b4; font-weight: 600; }
.work { flex: 1; min-height: 0; display: flex; }
.canvas-area { flex: 1; min-width: 0; background: #282828; padding: 7px 0 0 309px; }
.vscroll { width: 22px; flex: none; background: #505050; border-right: 1px solid #3a3a3a; }
.canvas { width: 880px; height: 880px; background: #000; position: relative; display: grid; grid-template-columns: repeat(10, 88px); grid-template-rows: repeat(10, 88px); }
.c-salmon { grid-area: 1 / 1 / 4 / 4; background: #f9967a; }
.c-hole { grid-area: 2 / 2 / 3 / 3; background: #000; }
.c-red { grid-area: 1 / 6 / 6 / 8; background: #f00; }
.c-green { grid-area: 1 / 8 / 6 / 9; background: #0f0; }
.c-blue { grid-area: 1 / 9 / 6 / 11; background: #00f; }
.c-white { grid-area: 6 / 6 / 11 / 11; background: #fff; }
.gridlines { position: absolute; inset: 0; background-image: linear-gradient(to right, rgba(255,255,255,.26) 1px, transparent 1px), linear-gradient(to bottom, rgba(255,255,255,.26) 1px, transparent 1px); background-size: 88px 88px; background-position: 87px 87px; }
.selection { position: absolute; left: 0; top: 0; width: 264px; height: 264px; border: 1px solid #4d8bea; }
.hd { position: absolute; width: 9px; height: 9px; background: #fff; border: 1px solid #4d8bea; margin: -5px 0 0 -5px; }
.hx0 { left: 0; } .hx1 { left: 50%; } .hx2 { left: 100%; }
.hy0 { top: 0; } .hy1 { top: 50%; } .hy2 { top: 100%; }
.status { height: 22px; flex: none; background: #505050; display: flex; align-items: center; font-size: 13px; color: #d4d4d4; }
.zoomval { width: 60px; padding-left: 10px; flex: none; }
.docinfo { width: 230px; height: 21px; background: #474747; display: flex; align-items: center; padding-left: 52px; font-size: 11.500px; }
.docinfo span { width: 165px; flex: none; }

/* dock */
.dock { width: 52px; flex: none; background: #505050; border-left: 1px solid #333; border-right: 2px solid #333; display: flex; flex-direction: column; }
.dock-top { justify-content: flex-end; padding-right: 10px; }
.dock-g { border-bottom: 2px solid #3a3a3a; flex: none; padding: 5px 0 0 3px; display: flex; flex-direction: column; align-items: center; }
.dock-g.g2 { height: 86px; }
.dock-g.g1 { height: 52px; }
.dock-g.g1 .di { height: 34px; margin-top: 1px; }
.di { height: 35px; display: flex; align-items: center; justify-content: center; width: 100%; flex: none; }
.char-a { font-size: 24px; color: #dcdcdc; gap: 1px; margin-top: -2px; }
.char-a i { width: 1px; height: 20px; background: #dcdcdc; }
.char-p { font: 700 25px/1 "Liberation Sans", sans-serif; color: #dcdcdc; }

/* panels */
.panels { width: 301px; flex: none; display: flex; flex-direction: column; background: #333; }
.panels-top { justify-content: flex-end; padding-right: 4px; }
.panel { background: #505050; display: flex; flex-direction: column; flex: none; }
.p-hist { height: 154px; margin-bottom: 5px; }
.p-lib { height: 387px; margin-bottom: 3px; }
.p-layers { height: 385px; }
.tabs { height: 35px; flex: none; background: #424242; display: flex; position: relative; font-size: 12px; letter-spacing: -.1px; }
.ptab { display: flex; align-items: center; padding-left: 12px; color: #a8a8a8; font-weight: 600; border-right: 1px solid #3a3a3a; white-space: nowrap; }
.ptab.on { background: #505050; color: #f0f0f0; border-right: 0; }
.t-hist { width: 85px; } .t-info { width: 48px; } .t-lib { width: 74px; } .t-adj { width: 99px; } .t-lay { width: 60px; } .t-chan { width: 77px; }
.pmenu { position: absolute; right: 9px; top: 12px; }
.hist-body { flex: 1; padding: 11px 0 4px 6px; }
.hist-box { width: 246px; height: 104px; background: #424242; border: 2px solid #4a4a4a; border-bottom: 0; position: relative; }
.hist-box i { position: absolute; width: 1px; }
.bar-m { right: 0; top: 39px; height: 14px; background: #d010d0; }
.bar-b { left: 114px; bottom: 0; height: 10px; background: #3030d0; }
.bar-g { left: 141px; bottom: 0; height: 10px; background: #10e010; }
.lib-search { height: 34px; flex: none; margin: 0 10px 0 11px; display: flex; align-items: center; gap: 6px; border-bottom: 1px solid #474747; padding-top: 7px; }
.lib-search span { font-size: 12.500px; font-style: italic; color: #6e6e6e; flex: 1; }
.lib-search .chev { margin-right: 4px; color: #888; }
.lib-select { height: 23px; flex: none; margin: 11px 11px 0; background: #4a4a4a; border: 1px solid #5a5a5a; border-radius: 3px; display: flex; align-items: center; justify-content: flex-end; padding-right: 5px; }
.lib-select .chev { color: #888; }
.lib-view { height: 39px; flex: none; display: flex; align-items: center; padding: 2px 16px 0 10px; font-size: 13px; color: #ececec; border-bottom: 1px solid #474747; }
.lib-view .chev { margin-left: 11px; }
.v-grid { margin-left: auto; width: 24px; height: 24px; background: #333; border-radius: 3px; display: flex; align-items: center; justify-content: center; }
.v-list { margin-left: 7px; }
.lib-body { flex: 1; min-height: 0; display: flex; flex-direction: column; align-items: center; padding-top: 59px; background: #4e4e4e; color: #666e6a; }
.cc { color: #6f6f6f; }
.lib-body p { margin: 7px 0 0; width: 251px; text-align: center; font-size: 12.800px; line-height: 18px; color: #ababab; }
.lib-foot { height: 30px; flex: none; display: flex; align-items: center; justify-content: flex-end; padding: 0 28px 0 0; border-top: 1px solid #444; font-size: 12px; color: #e4e4e4; }
.cc-small { margin-left: 7px; color: #d0d0d0; }
.lib-trash { margin-left: 13px; color: #808080; }

.lrow { flex: none; display: flex; align-items: center; font-size: 12px; }
.r-filter { height: 38px; border-bottom: 1px solid #444; padding: 6px 0 0 4px; }
.r-blend { height: 35px; border-bottom: 1px solid #444; padding: 3px 0 0 4px; }
.r-lock { height: 38px; padding-left: 8px; }
.drop { height: 23px; background: #444; border: 1px solid #5a5a5a; border-radius: 3px; display: flex; align-items: center; padding: 0 5px 0 9px; color: #e6e6e6; }
.drop .chev { margin-left: auto; }
.d-kind { width: 108px; gap: 5px; }
.d-normal { width: 161px; }
.f-icons { display: flex; align-items: center; margin-left: 16px; gap: 16px; }
.f-t { font: 700 16px/1 "Liberation Serif", serif; width: 14px; text-align: center; color: #ddd; }
.toggle { width: 10px; height: 22px; margin-left: 16px; border: 1px solid #3e3e3e; border-radius: 6px; position: relative; }
.toggle b { position: absolute; left: -1px; top: -6px; width: 10px; height: 10px; border-radius: 50%; background: #e8e8e8; }
.fld-label { color: #c8c8c8; flex: none; }
.l-op { margin-left: 9px; width: 52px; }
.fld { width: 61px; height: 21px; background: #424242; border-radius: 3px; display: flex; align-items: center; color: #e6e6e6; font-size: 12px; flex: none; }
.fld span { width: 42px; text-align: center; border-right: 1px solid #555; }
.fld .chev { margin-left: 5px; }
.l-lock { width: 40px; }
.lock-icons { display: flex; align-items: center; gap: 12px; color: #dcdcdc; width: 153px; }
.l-fill { width: 25px; text-align: left; }
.layers-wrap { display: flex; height: 208px; flex: none; background: #474747; }
.layer-list { width: 279px; flex: none; }
.layer { height: 52px; display: flex; border-bottom: 2px solid #3f3f3f; background: #4c4c4c; }
.eye { width: 38px; flex: none; display: flex; align-items: center; justify-content: center; border-right: 1px solid #3f3f3f; }
.lcell { flex: 1; display: flex; align-items: center; padding-left: 5px; gap: 14px; }
.layer.active .lcell { background: #696969; }
.thumb { width: 38px; height: 40px; flex: none; position: relative; border: 1px solid #262626; background-color: #fff; background-image: repeating-conic-gradient(#cfcfcf 0 25%, #fff 0 50%); background-size: 8px 8px; }
.tc { position: absolute; }
.tc-salmon { left: 1px; top: 1px; width: 11px; height: 11px; background: #f9967a; display: flex; align-items: center; justify-content: center; }
.tc-salmon::after { content: ""; width: 3px; height: 3px; background: #fff; }
.tc-blue { left: 30px; top: 0; width: 7px; height: 19px; background: #00f; }
.tc-green { left: 26px; top: 0; width: 7px; height: 18px; background: #0f0; }
.tc-red { left: 18px; top: 1px; width: 8px; height: 18px; background: #f00; }
.brackets { position: absolute; left: -5px; top: -4px; }
.badge { position: absolute; right: -1px; bottom: -1px; width: 18px; height: 18px; background: #444; border: 1px solid #262626; display: flex; align-items: center; justify-content: center; }
.lname { font-size: 12px; color: #ececec; white-space: nowrap; }
.l-scroll { width: 22px; flex: none; display: flex; flex-direction: column; align-items: center; padding-top: 10px; background: #4a4a4a; }
.l-scroll .up { transform: rotate(180deg); color: #888; }
.l-scroll .chev { color: #888; }
.l-thumb { width: 14px; height: 95px; margin: 5px 0 86px; background: #666; }
.l-foot { flex: 1; display: flex; align-items: center; padding: 0 0 0 45px; gap: 18px; color: #dcdcdc; border-top: 1px solid #444; }
.fx { font: italic 15px/1 "Liberation Serif", serif; width: 16px; color: #c8c8c8; position: relative; }
.fx::after { content: ""; position: absolute; right: -6px; bottom: -1px; border: 2px solid transparent; border-top-color: #eee; border-bottom: 0; }

/* taskbar */
.taskbar { height: 50px; flex: none; display: flex; align-items: stretch; background: linear-gradient(to right, #191919 0, #191919 500px, #2b2122 880px, #211c1c 1200px, #1a1a1a 1500px); color: #fff; }
.start { width: 60px; display: flex; align-items: center; justify-content: center; flex: none; }
.searchbox { width: 430px; flex: none; background: #353535; border: 1px solid #6a6a6a; border-bottom-color: #4d6e66; display: flex; align-items: center; padding-left: 15px; gap: 14px; font-size: 18px; color: #d8d8d8; }
.cortana { width: 62px; flex: none; display: flex; align-items: center; justify-content: center; }
.cortana i { width: 18px; height: 18px; border-radius: 50%; border: 3px solid #f0f0f0; }
.tk { width: 62px; flex: none; display: flex; align-items: center; justify-content: center; position: relative; }
.tk.run::after { content: ""; position: absolute; left: 5px; right: 5px; bottom: 0; height: 3px; background: #f2c2ad; }
.tk-active { background: #5a4b4f; }
.tk-active.run::after { left: 0; right: 0; }
.ps-big { width: 26px; height: 25px; margin: 0; font-size: 13px; line-height: 20px; }
.ppt { width: 28px; height: 28px; border-radius: 50%; background: linear-gradient(to right, #c2391d 50%, #ee8e6d 50%); display: flex; align-items: center; justify-content: flex-start; padding-left: 2px; }
.ppt b { width: 14px; height: 16px; background: #b7361a; color: #fff; font: 700 11px/16px "Open Sans", sans-serif; text-align: center; }
.capp { width: 30px; height: 30px; border-radius: 4px; background: #f0564a; display: flex; align-items: center; justify-content: center; }
.tray { margin-left: auto; display: flex; align-items: center; padding-right: 10px; }
.ti { width: 30px; flex: none; display: flex; justify-content: center; align-items: center; }
.ti-pen { width: 35px; }
.clock { width: 90px; flex: none; display: flex; flex-direction: column; align-items: center; font-size: 14.500px; line-height: 24px; color: #ededed; margin-left: 2px; }
.notif { width: 50px; flex: none; position: relative; display: flex; justify-content: center; align-items: center; margin-left: 3px; }
.notif b { position: absolute; left: 28px; top: 7px; width: 20px; height: 20px; border-radius: 50%; background: #333; border: 1px solid #777; font: 400 13px/18px "Open Sans", sans-serif; text-align: center; }
```
